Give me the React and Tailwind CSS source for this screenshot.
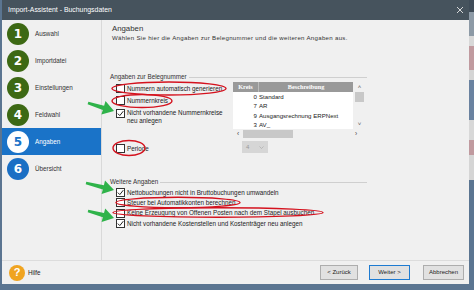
import React from "react";

function Box({ checked }) {
  return (
    <span className="w-[9px] h-[9px] border border-[#333] bg-white flex items-center justify-center shrink-0">
      {checked && (
        <svg width="7" height="7" viewBox="0 0 7 7">
          <path d="M0.8 3.6 L2.8 5.6 L6.3 1.2" fill="none" stroke="#222" strokeWidth="1" />
        </svg>
      )}
    </span>
  );
}

function Step({ n, label, state }) {
  const sel = state === "sel";
  const circle =
    state === "done"
      ? "bg-[#3d6914] text-white"
      : sel
      ? "bg-white text-[#1a73c8]"
      : "bg-[#1a6fc4] text-white";
  return (
    <div className={`h-[27px] flex items-center ${sel ? "bg-[#1a73c8]" : ""}`}>
      <div className={`ml-[5px] w-[22px] h-[22px] rounded-full flex items-center justify-center text-[12px] font-bold font-['DejaVu_Sans',sans-serif] ${circle}`}>
        {n}
      </div>
      <span className={`ml-[6px] text-[6.3px] ${sel ? "text-white" : "text-[#333]"}`}>{label}</span>
    </div>
  );
}

function arrow(x1, y1, x2, y2) {
  const dx = x2 - x1, dy = y2 - y1;
  const L = Math.hypot(dx, dy);
  const ux = dx / L, uy = dy / L;
  const nx = -uy, ny = ux;
  const hl = 11, sw = 2.2, hw = 7;
  const bx = x2 - ux * hl, by = y2 - uy * hl;
  const p = [
    [x1 + nx * sw * 0.6, y1 + ny * sw * 0.6],
    [bx + nx * sw, by + ny * sw],
    [bx + nx * hw, by + ny * hw],
    [x2, y2],
    [bx - nx * hw, by - ny * hw],
    [bx - nx * sw, by - ny * sw],
    [x1 - nx * sw * 0.6, y1 - ny * sw * 0.6],
  ];
  return p.map((q) => q[0].toFixed(1) + "," + q[1].toFixed(1)).join(" ");
}

export default function App() {
  const rows = [
    ["0", "Standard"],
    ["7", "AR"],
    ["9", "Ausgangsrechnung ERPNext"],
    ["3", "AV_"],
  ];
  return (
    <div className="relative w-[474px] h-[290px] overflow-hidden flex bg-[#5b7591] font-['Liberation_Sans',Arial,sans-serif] text-[#222]">
      <div className="w-[469px] flex flex-col">
        <div className="h-[284px] flex">
          <div className="w-[2px] bg-[#5b7591]" />
          <div className="flex-1 flex flex-col bg-[#f0f0f0]">
            {/* title bar */}
            <div className="h-[20px] bg-[#46535d] flex items-center justify-between pl-[6px] pr-[5px]">
              <span className="text-white text-[6.9px]">Import-Assistent - Buchungsdaten</span>
              <svg width="8" height="8" viewBox="0 0 8 8">
                <path d="M1 1 L7 7 M7 1 L1 7" stroke="#e8e8e8" strokeWidth="0.9" />
              </svg>
            </div>
            {/* body */}
            <div className="flex-1 flex">
              <div className="w-[100px] border-r border-[#d9d9d9] flex flex-col">
                <Step n="1" label="Auswahl" state="done" />
                <Step n="2" label="Importdatei" state="done" />
                <Step n="3" label="Einstellungen" state="done" />
                <Step n="4" label="Feldwahl" state="done" />
                <Step n="5" label="Angaben" state="sel" />
                <Step n="6" label="Übersicht" state="todo" />
              </div>
              <div className="flex-1 pl-[8px] flex flex-col">
                <div className="pl-[2px] mt-[4px] text-[7.8px] leading-[10px] text-[#333]">Angaben</div>
                <div className="pl-[2px] text-[6.1px] leading-[8px] tracking-[0.3px] text-[#333] whitespace-nowrap">
                  Wählen Sie hier die Angaben zur Belegnummer und die weiteren Angaben aus.
                </div>
                {/* group 1 */}
                <div className="mt-[31px] w-[257px] flex items-center h-[8px]">
                  <span className="text-[6.3px] leading-[8px] text-[#333] pr-[2px] whitespace-nowrap">Angaben zur Belegnummer</span>
                  <span className="flex-1 h-px bg-[#cfcfcf]" />
                </div>
                <div className="flex w-[257px]">
                  <div className="w-[123px] shrink-0 pl-[6px] flex flex-col text-[6.3px] leading-[8px] whitespace-nowrap">
                    <div className="mt-[3px] h-[9px] flex items-center gap-[2px]">
                      <Box /> <span>Nummern automatisch generieren</span>
                    </div>
                    <div className="mt-[3px] h-[9px] flex items-center gap-[2px]">
                      <Box /> <span>Nummernkreis</span>
                    </div>
                    <div className="mt-[4px] flex items-start gap-[2px]">
                      <span className="mt-[-0.5px]"><Box checked /></span>
                      <span>Nicht vorhandene Nummernkreise<br />neu anlegen</span>
                    </div>
                    <div className="mt-[19px] h-[9px] flex items-center gap-[2px]">
                      <Box /> <span>Periode</span>
                    </div>
                  </div>
                  <div className="mt-[1px] flex flex-col shrink-0">
                    <div className="w-[133px] flex bg-white">
                      <div className="w-[120px] flex flex-col">
                        <div className="h-[10px] flex bg-[#999] text-white font-bold text-[6.3px] font-['Liberation_Serif',serif]">
                          <div className="w-[26px] border-r border-[#bbb] flex items-center justify-center">Kreis</div>
                          <div className="flex-1 flex items-center justify-center">Beschreibung</div>
                        </div>
                        {rows.map(([k, d]) => (
                          <div key={k} className="h-[9.3px] flex items-center text-[6.1px] whitespace-nowrap">
                            <span className="w-[24px] text-right">{k}</span>
                            <span className="ml-[2px]">{d}</span>
                          </div>
                        ))}
                      </div>
                      <div className="w-[13px] bg-[#f0f0f0] flex flex-col items-center">
                        <span className="h-[10px] text-[6px] leading-[10px] text-[#555]">˄</span>
                        <span className="w-[9px] h-[10px] bg-[#c8c8c8]" />
                        <span className="flex-1" />
                        <span className="h-[9px] text-[6px] leading-[9px] text-[#555]">˅</span>
                      </div>
                    </div>
                    <div className="w-[133px] h-[9px] bg-[#f0f0f0] flex items-center text-[6.5px] text-[#444]">
                      <span className="w-[10px] text-center">‹</span>
                      <span className="w-[50px] h-[8px] bg-[#c8c8c8]" />
                      <span className="flex-1" />
                      <span className="w-[20px] text-center">›</span>
                    </div>
                    <div className="mt-[3px] ml-[9px] w-[26px] h-[12px] bg-[#d6d6d6] flex items-center justify-between px-[4px] text-[6px] text-[#999]">
                      <span>4</span>
                      <svg width="5" height="3" viewBox="0 0 5 3"><path d="M0.5 0.5 L2.5 2.5 L4.5 0.5" fill="none" stroke="#aaa" strokeWidth="0.7" /></svg>
                    </div>
                  </div>
                </div>
                {/* group 2 */}
                <div className="mt-[25px] w-[257px] flex items-center h-[8px]">
                  <span className="text-[6.3px] leading-[8px] text-[#333] pr-[2px] whitespace-nowrap">Weitere Angaben</span>
                  <span className="flex-1 h-px bg-[#cfcfcf]" />
                </div>
                <div className="pl-[6px] mt-[1px] flex flex-col text-[6.3px] whitespace-nowrap">
                  {[
                    [true, "Nettobuchungen nicht in Bruttobuchungen umwandeln"],
                    [false, "Steuer bei Automatikkonten berechnen"],
                    [false, "Keine Erzeugung von Offenen Posten nach dem Stapel ausbuchen"],
                    [true, "Nicht vorhandene Kostenstellen und Kostenträger neu anlegen"],
                  ].map(([c, t]) => (
                    <div key={t} className="h-[10.4px] flex items-center gap-[2px]">
                      <Box checked={c} /> <span>{t}</span>
                    </div>
                  ))}
                </div>
              </div>
            </div>
            {/* footer */}
            <div className="h-[24px] border-t border-[#dcdcdc] flex items-center pl-[7px] pr-[5px]">
              <div className="w-[16px] h-[16px] rounded-full bg-[#f0a420] text-white text-[11px] font-bold flex items-center justify-center">?</div>
              <span className="ml-[3px] text-[6.3px]">Hilfe</span>
              <span className="flex-1" />
              <button className="w-[38px] h-[15px] bg-[#e1e1e1] border border-[#adadad] text-[6px]">&lt; Zurück</button>
              <button className="ml-[11px] w-[41px] h-[15px] bg-[#e1e1e1] border-[1.5px] border-[#1e7bd1] text-[6px]">Weiter &gt;</button>
              <button className="ml-[13px] w-[41px] h-[15px] bg-[#e1e1e1] border border-[#adadad] text-[6px]">Abbrechen</button>
            </div>
          </div>
        </div>
        <div className="flex-1 bg-[#5b7591]" />
      </div>
      <div className="flex-1 flex flex-col">
        <div className="h-[12px] bg-[#3f4c58]" />
        <div className="h-[24px] bg-[#8d9aa6]" />
        <div className="h-[10px] bg-[#d8d8d8]" />
        <div className="h-[24px] bg-[#c09a9f]" />
        <div className="h-[10px] bg-[#d5d5d5]" />
        <div className="h-[40px] bg-[#6a82a0]" />
        <div className="h-[20px] bg-[#d8d8d8]" />
        <div className="h-[15px] bg-[#c09a9f]" />
        <div className="h-[25px] bg-[#d5d5d5]" />
        <div className="flex-1 bg-[#5b7591]" />
      </div>
      {/* annotations */}
      <svg className="absolute inset-0 pointer-events-none" width="474" height="290" viewBox="0 0 474 290">
        <g fill="none" stroke="#d4121e" strokeWidth="1.4">
          <ellipse cx="169" cy="88.5" rx="57" ry="6.5" />
          <ellipse cx="142" cy="101" rx="30" ry="6.5" />
          <ellipse cx="129" cy="148" rx="16" ry="7.5" />
          <ellipse cx="178" cy="202.5" rx="62" ry="5.2" />
          <ellipse cx="218" cy="212.5" rx="105" ry="4.8" />
        </g>
        <g fill="#2fb34a">
          <polygon points={arrow(88, 103, 114, 111)} />
          <polygon points={arrow(86, 183, 114, 190)} />
          <polygon points={arrow(88, 211, 114, 218)} />
        </g>
      </svg>
    </div>
  );
}
